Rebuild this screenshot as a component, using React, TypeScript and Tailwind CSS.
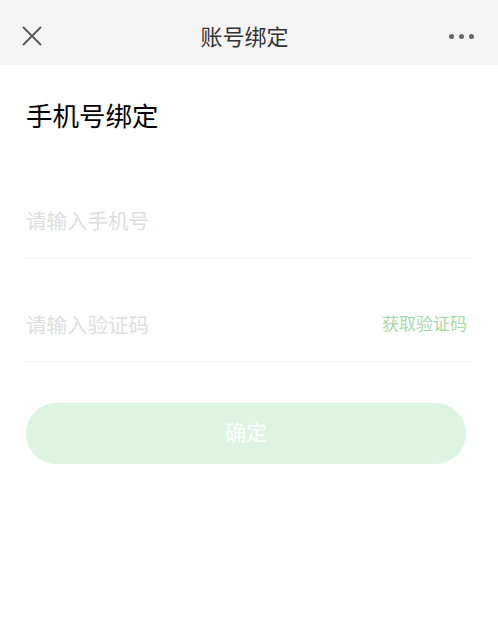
import React from 'react'

const cjk = { fontFamily: '"Noto Sans CJK SC", "Noto Sans", sans-serif' }

export default function App() {
  return (
    <div className="w-[498px] h-[625px] bg-white flex flex-col" style={cjk}>
      <div className="h-[65px] bg-[#f5f5f5] flex items-center px-[22px] pt-[7px] shrink-0">
        <svg width="20" height="20" viewBox="0 0 20 20" className="shrink-0">
          <path d="M1 1 L19 19 M19 1 L1 19" stroke="#555" strokeWidth="1.8" fill="none" />
        </svg>
        <div className="flex-1 text-center text-[22px] text-[#333] mt-[-1px] pr-[2px]">账号绑定</div>
        <div className="flex items-center gap-[5px] pr-[2px]">
          <span className="w-[5px] h-[5px] rounded-full bg-[#666]" />
          <span className="w-[5px] h-[5px] rounded-full bg-[#666]" />
          <span className="w-[5px] h-[5px] rounded-full bg-[#666]" />
        </div>
      </div>
      <div className="pl-[26px] pr-[28px]">
        <h1 className="text-[26.5px] leading-none text-black mt-[37px] font-normal">手机号绑定</h1>
        <div className="mt-[60px] h-[70px] flex items-center border-b border-[#f3f3f3]">
          <span className="text-[20.5px] text-[#dedede] mt-[-6px]">请输入手机号</span>
        </div>
        <div className="mt-[33px] h-[70px] flex items-center border-b border-[#f3f3f3]">
          <span className="flex-1 text-[20.5px] text-[#dedede] mt-[-4px]">请输入验证码</span>
          <span className="text-[17px] text-[#a7d9ab] mt-[-6px] pr-[3px]">获取验证码</span>
        </div>
        <button className="mt-[41px] w-[440px] h-[61px] rounded-full bg-[#def4e2] text-white text-[21px] flex items-center justify-center">
          <span className="mt-[-3px]">确定</span>
        </button>
      </div>
    </div>
  )
}
